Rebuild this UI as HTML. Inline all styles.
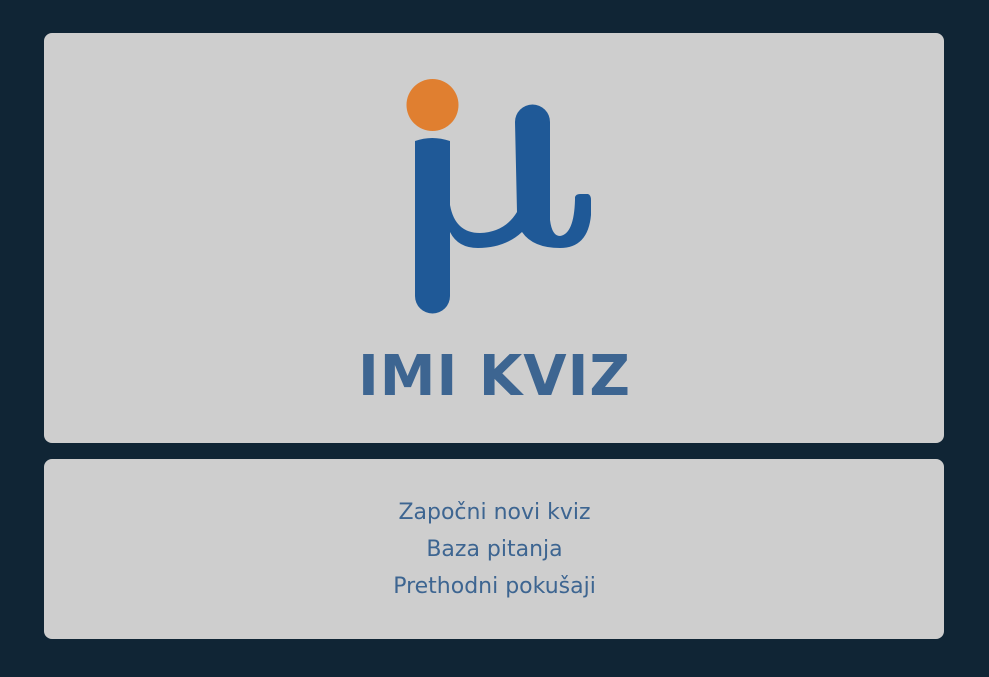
<!DOCTYPE html>
<html><head><meta charset="utf-8"><style>
html,body{margin:0;padding:0;width:989px;height:677px;background:#102535;overflow:hidden;font-family:"DejaVu Sans","Liberation Sans",sans-serif}
.c{position:absolute;left:44px;width:900px;background:#cecece;border-radius:8px}
#a{top:33px;height:410px}
#b{top:459px;height:180px}
.t{position:absolute;left:0;width:989px;top:344px;text-align:center;font-weight:bold;font-size:56px;letter-spacing:1px;color:#3d6591}
.l{position:absolute;left:0;width:989px;text-align:center;font-size:22px;color:#3d6591}
</style></head><body>
<div class="c" id="a"></div><div class="c" id="b"></div>
<svg style="position:absolute;left:0;top:0" width="989" height="677">
<circle cx="432.5" cy="105" r="26" fill="#e07f30"/>
<path fill="#1f5997" d="M415,141 Q432,135 450,141 L450,205 Q455,233 480,233 Q505,232 517,212 L515,122 A17.5,17.5 0 0 1 550,122 L550,220 Q552,236 560,236 Q574,234 575,200 L575,197 Q576,194 580,194 L588,194 Q591,195 591,200 L591,215 Q588,248 560,248 Q533,248 522,232 Q505,248 478,248 Q458,248 450,232 L450,296 A17.5,17.5 0 0 1 415,296 Z"/>
</svg>
<div class="t">IMI KVIZ</div>
<div class="l" style="top:500px">Započni novi kviz</div>
<div class="l" style="top:537px">Baza pitanja</div>
<div class="l" style="top:574px">Prethodni pokušaji</div>
</body></html>
